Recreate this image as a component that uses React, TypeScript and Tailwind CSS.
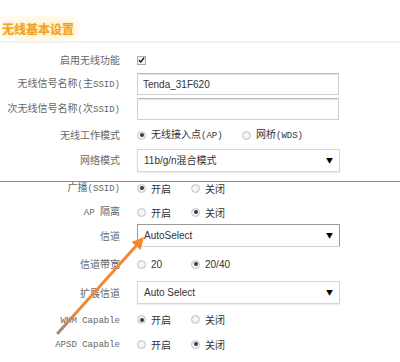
import React from 'react'

const mono = "font-['Liberation_Mono',monospace] text-[9px]"

function Radio({ checked }: { checked?: boolean }) {
  return (
    <span className="flex h-[9px] w-[9px] shrink-0 items-center justify-center rounded-full border border-[#c4c4c4] bg-[radial-gradient(circle,#ffffff_0%,#e2e2e2_100%)]">
      {checked && <span className="h-[4px] w-[4px] rounded-full bg-[#3a3a3a]" />}
    </span>
  )
}

function Option({ checked, children, width }: { checked?: boolean; children: React.ReactNode; width?: string }) {
  return (
    <div className={`flex items-center gap-[5px] ${width ?? ''}`}>
      <Radio checked={checked} />
      <span className="text-[10px] text-[#333]">{children}</span>
    </div>
  )
}

function Row({ label, h, children }: { label: React.ReactNode; h: string; children?: React.ReactNode }) {
  return (
    <div className={`flex items-center ${h}`}>
      <div className="w-[120px] shrink-0 text-right text-[10px] leading-none text-[#666]">{label}</div>
      <div className="ml-[17px] flex flex-1 items-center">{children}</div>
    </div>
  )
}

function TextBox({ value }: { value?: string }) {
  return (
    <div className="flex h-[22px] w-[202px] items-center border border-[#d0d0d0] border-t-[#b8b8b8] bg-white px-[5px] font-['Liberation_Sans',sans-serif] text-[10px] text-[#333] shadow-[inset_0_1px_1px_#e4e4e4]">
      {value}
    </div>
  )
}

function Select({ value, dark }: { value: string; dark?: boolean }) {
  return (
    <div
      className={`flex h-[23px] w-[203px] items-center justify-between bg-white pl-[6px] pr-[6px] text-[10px] text-[#333] ${
        dark ? 'border border-[#999] border-b-[#d0d0d0]' : 'border border-[#d6d6d6] shadow-[0_1px_1px_#eee]'
      }`}
    >
      <span className="font-['Liberation_Sans','Noto_Sans_CJK_SC',sans-serif]">{value}</span>
      <span className="text-[7px] text-black">▼</span>
    </div>
  )
}

export default function App() {
  return (
    <div className="relative h-[362px] w-[400px] overflow-hidden bg-white font-['Noto_Sans_CJK_SC',sans-serif]">
      {/* Title */}
      <div className="h-[16px]" />
      <div className="flex h-[25px] w-[80px] items-center bg-[radial-gradient(ellipse_at_center,#fff1cc_0%,#fff8e6_60%,#ffffff_100%)] pl-[2px]">
        <span className="text-[12px] font-bold text-[#eea224] [text-shadow:0_0_2px_#ffd98a]">无线基本设置</span>
      </div>
      <div className="h-[2px] bg-[#f1f1f1]" />
      <div className="h-[5px]" />

      <Row label="启用无线功能" h="h-[24px]">
        <span className="flex h-[9px] w-[9px] items-center justify-center border border-[#aaa] bg-[#f4f4f4]">
          <svg width="8" height="8" viewBox="0 0 8 8">
            <path d="M1 4.2 L3.2 6.3 L7 1.2" fill="none" stroke="#111" strokeWidth="1.6" />
          </svg>
        </span>
      </Row>
      <Row label={<>无线信号名称<span className={mono}>(</span>主<span className={mono}>SSID)</span></>} h="h-[24px]">
        <TextBox value="Tenda_31F620" />
      </Row>
      <Row label={<>次无线信号名称<span className={mono}>(</span>次<span className={mono}>SSID)</span></>} h="h-[26px]">
        <TextBox />
      </Row>
      <Row label="无线工作模式" h="h-[26px]">
        <Option checked width="w-[105px]">
          无线接入点<span className={mono}>(AP)</span>
        </Option>
        <Option>
          网桥<span className={mono}>(WDS)</span>
        </Option>
      </Row>
      <Row label="网络模式" h="h-[24px]">
        <Select value="11b/g/n混合模式" />
      </Row>
      <div className="h-[4px]" />
      <Row label={<>广播<span className={mono}>(SSID)</span></>} h="h-[24px]">
        <Option checked width="w-[54px]">开启</Option>
        <Option>关闭</Option>
      </Row>
      <Row label={<><span className={mono}>AP </span>隔离</>} h="h-[24px]">
        <Option width="w-[54px]">开启</Option>
        <Option checked>关闭</Option>
      </Row>
      <Row label="信道" h="h-[23px]">
        <Select value="AutoSelect" dark />
      </Row>
      <Row label="信道带宽" h="h-[34px]">
        <Option width="w-[54px]">
          <span className="font-['Liberation_Sans',sans-serif]">20</span>
        </Option>
        <Option checked>
          <span className="font-['Liberation_Sans',sans-serif]">20/40</span>
        </Option>
      </Row>
      <Row label="扩展信道" h="h-[23px]">
        <Select value="Auto Select" />
      </Row>
      <Row label={<span className={mono}>WMM Capable</span>} h="h-[31px]">
        <Option checked width="w-[54px]">开启</Option>
        <Option>关闭</Option>
      </Row>
      <Row label={<span className={mono}>APSD Capable</span>} h="h-[18px]">
        <Option width="w-[54px]">开启</Option>
        <Option checked>关闭</Option>
      </Row>

      {/* annotation overlays: red marker line and orange arrow */}
      <svg className="pointer-events-none absolute left-0 top-0" width="400" height="362">
        <defs>
          <linearGradient id="arw" x1="58" y1="333" x2="144" y2="237" gradientUnits="userSpaceOnUse">
            <stop offset="0" stopColor="#a08878" />
            <stop offset="0.25" stopColor="#f0883a" />
            <stop offset="1" stopColor="#f7862c" />
          </linearGradient>
        </defs>
        <line x1="0" y1="181.5" x2="400" y2="181.5" stroke="#ee5c7a" strokeWidth="1.2" />
        <line x1="58" y1="333" x2="136" y2="246" stroke="url(#arw)" strokeWidth="3" strokeLinecap="round" />
        <polygon points="144,237 140.5,250 131.5,242" fill="#f7862c" />
      </svg>
    </div>
  )
}
